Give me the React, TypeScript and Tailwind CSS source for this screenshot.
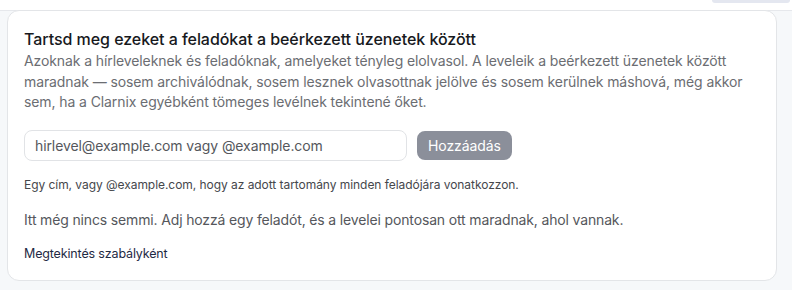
export default function App() {
  return (
    <div
      className="min-h-[290px] bg-[#f6f8fa] text-[#1b1d21]"
      style={{ fontFamily: "Inter, 'Noto Sans', sans-serif" }}
    >
      {/* strip above the card */}
      <div className="h-[11px] bg-white border-b border-[#e6e8ec] flex justify-end">
        <div className="w-[78px] h-[3px] bg-[#e4e7f0] rounded-b-md mr-[2px]" />
      </div>

      <div className="pl-[7px] pr-[15px] pb-[12px] -mt-px">
        <section className="bg-white border border-[#e3e5e8] rounded-[12px] px-[16px] pt-[17px] pb-[17px]">
          <h2 className="text-[16px] leading-[22px] font-medium text-[#17191d] tracking-[-0.05px]">
            Tartsd meg ezeket a feladókat a beérkezett üzenetek között
          </h2>
          <p className="mt-[1px] text-[14px] leading-[20.5px] text-[#6b6d72] tracking-[-0.1px] max-w-[720px]">
            Azoknak a hírleveleknek és feladóknak, amelyeket tényleg elolvasol. A leveleik a beérkezett
            üzenetek között maradnak — sosem archiválódnak, sosem lesznek olvasottnak jelölve és sosem
            kerülnek máshová, még akkor sem, ha a Clarnix egyébként tömeges levélnek tekintené őket.
          </p>

          <div className="mt-[17px] flex items-center gap-[10px]">
            <div className="w-[383px] h-[31px] border border-[#e1e3e6] rounded-[8px] flex items-center px-[10px] text-[14px] text-[#55575c] tracking-[-0.1px]">
              hirlevel@example.com vagy @example.com
            </div>
            <button className="h-[29px] px-[11px] rounded-[8px] bg-[#8b8f9a] text-white text-[14px] tracking-[-0.1px]">
              Hozzáadás
            </button>
          </div>

          <p className="mt-[16px] text-[12px] leading-[16px] text-[#45474c] tracking-[-0.05px]">
            Egy cím, vagy @example.com, hogy az adott tartomány minden feladójára vonatkozzon.
          </p>

          <p className="mt-[17px] text-[14px] leading-[20px] text-[#55575c] tracking-[-0.15px]">
            Itt még nincs semmi. Adj hozzá egy feladót, és a levelei pontosan ott maradnak, ahol vannak.
          </p>

          <a className="block mt-[15px] text-[12.5px] leading-[18px] text-[#1f2a44] tracking-[-0.15px]">
            Megtekintés szabályként
          </a>
        </section>
      </div>
    </div>
  );
}
